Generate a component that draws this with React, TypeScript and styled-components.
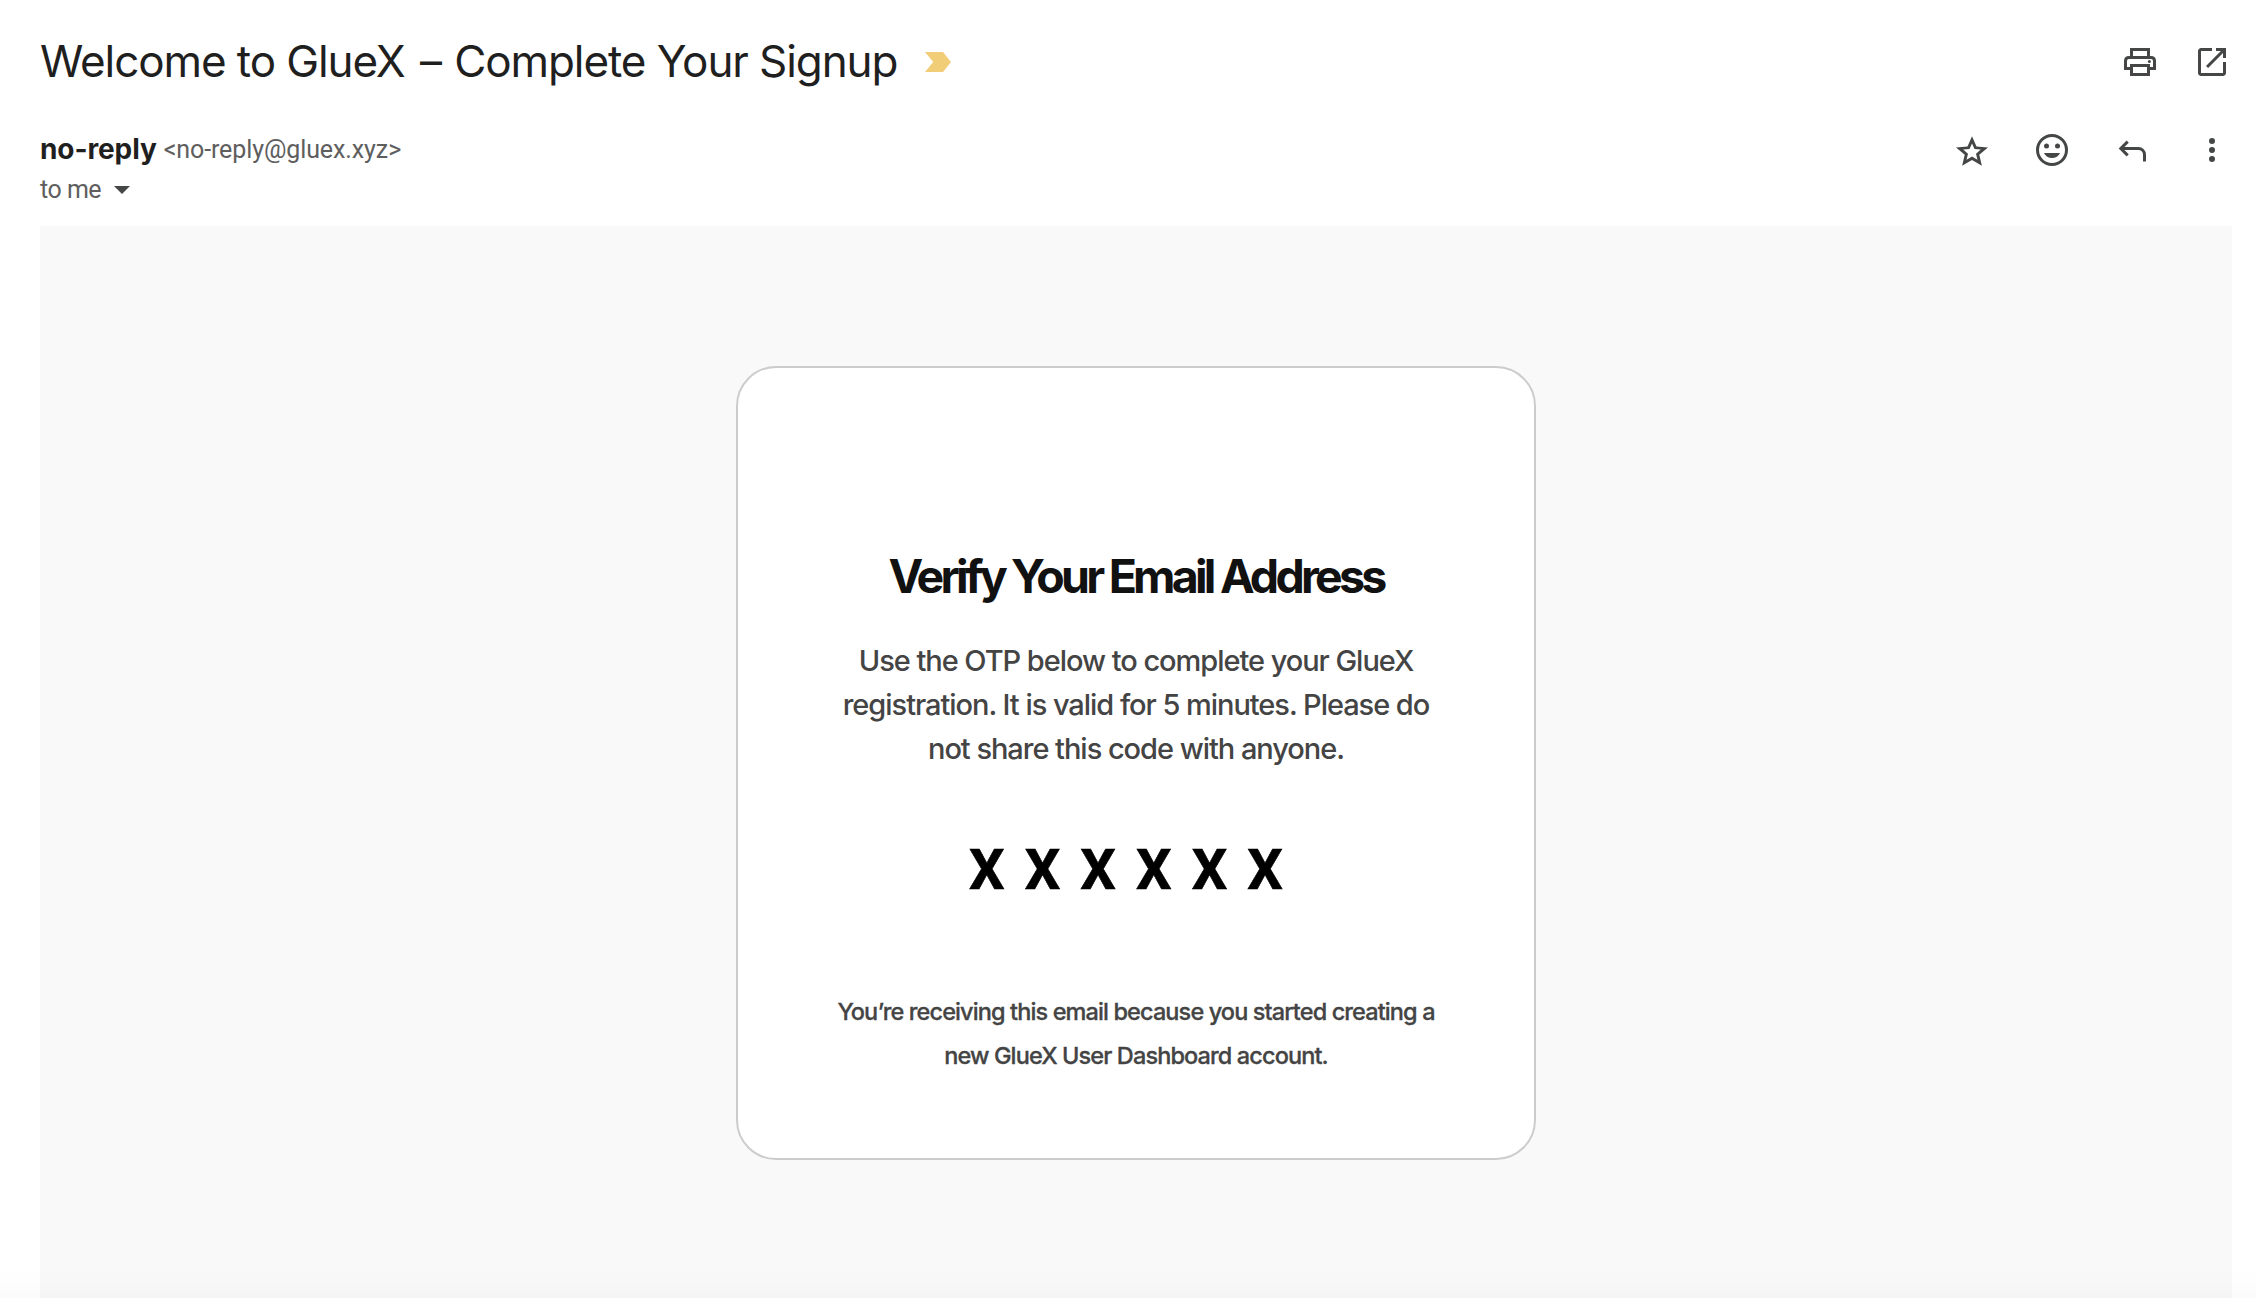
import React from "react";
import styled, { createGlobalStyle } from "styled-components";

const GlobalStyle = createGlobalStyle`
  * { box-sizing: border-box; }
  body { margin: 0; background: #fff; font-family: Inter, "Liberation Sans", sans-serif; }
  h1, h2, p { margin: 0; font-weight: inherit; }
`;

const Page = styled.main`
  display: flex;
  flex-direction: column;
  width: 100%;
  height: 1298px;
  padding: 0 24px 0 40px;
  overflow: hidden;
  background: linear-gradient(to bottom, #fff 1268px, #fbfbfb 1298px);
  color: #1f1f1f;
`;

const SubjectRow = styled.header`
  display: flex;
  align-items: center;
  justify-content: space-between;
  height: 124px;
`;

const SubjectGroup = styled.div`
  display: flex;
  align-items: center;
  gap: 28px;
`;

const Subject = styled.h1`
  padding-bottom: 2px;
  font-size: 44px;
  font-weight: 400;
  line-height: 54px;
  letter-spacing: -1.09px;
  white-space: nowrap;
`;

const Dash = styled.span`
  padding: 0 2px 0 4px;
`;

const Actions = styled.div<{ $gap: number }>`
  display: flex;
  align-items: center;
  gap: ${(p) => p.$gap}px;
  color: #444746;
`;

const IconButton = styled.button`
  display: grid;
  place-items: center;
  width: 40px;
  height: 40px;
  padding: 0;
  border: 0;
  background: none;
  color: inherit;

  svg { display: block; width: 40px; height: 40px; }
`;

const SenderRow = styled.section`
  display: flex;
  align-items: flex-start;
  justify-content: space-between;
  height: 102px;
  padding-top: 6px;
`;

const SenderInfo = styled.div`
  display: flex;
  flex-direction: column;
  padding-top: 1px;
  white-space: nowrap;
`;

const SenderLine = styled.div`
  display: flex;
  gap: 7px;
  height: 36px;
`;

const SenderName = styled.span`
  font-size: 28px;
  font-weight: 700;
  line-height: 36px;
  letter-spacing: -0.1px;
`;

const Meta = styled.span<{ $spacing: number }>`
  color: #5e5e5e;
  font-family: Roboto, "Liberation Sans", sans-serif;
  font-size: 25px;
  line-height: 37px;
  letter-spacing: ${(p) => p.$spacing}px;
`;

const RecipientLine = styled.div`
  display: flex;
  align-items: center;
  gap: 13px;
  margin-top: 4px;

  svg { margin-top: 1px; }
`;

const MessageBody = styled.section`
  display: flex;
  flex: 1;
  align-items: flex-start;
  justify-content: center;
  padding-top: 140px;
  background: linear-gradient(to bottom, #f9f9f9 1042px, #f5f5f5 1072px);
`;

const Card = styled.article`
  display: flex;
  flex-direction: column;
  align-items: center;
  width: 800px;
  height: 794px;
  padding-top: 180px;
  border: 2px solid #ccc;
  border-radius: 40px;
  background: #fff;
  text-align: center;
`;

const Heading = styled.h2`
  color: #111;
  font-size: 46.5px;
  font-weight: 700;
  line-height: 57px;
  letter-spacing: -3.76px;
  white-space: nowrap;
`;

const Instructions = styled.p`
  margin-top: 34px;
  color: #444;
  font-size: 29px;
  font-weight: 500;
  line-height: 44px;
  letter-spacing: -1.04px;
`;

const Code = styled.p`
  margin-top: 66px;
  color: #000;
  font-family: Roboto, "Liberation Sans", sans-serif;
  font-size: 56px;
  font-weight: 700;
  line-height: 66px;
  letter-spacing: 20.12px;
  -webkit-text-stroke: 0.6px #000;
`;

const Notice = styled.p`
  margin-top: 87px;
  color: #444;
  font-size: 23.5px;
  font-weight: 500;
  line-height: 44px;
  letter-spacing: -0.887px;
  -webkit-text-stroke: 0.3px #444;
`;

const Line = styled.span`
  display: block;
  white-space: nowrap;
`;

const ImportanceMarker = () => (
  <svg width="26" height="20" viewBox="0 0 26 20" fill="#f2cd78" aria-label="Important">
    <path d="M0 0h18l8 10-8 10H0l8.2-10z" />
  </svg>
);

const Caret = () => (
  <svg width="16" height="8" viewBox="0 0 16 8" fill="#444746" aria-hidden="true">
    <path d="M0 0h16L8 8z" />
  </svg>
);

const PrintIcon = () => (
  <svg viewBox="0 0 20 20" fill="none" stroke="currentColor" strokeWidth="1.5">
    <path d="M5.75 7V3.75h8.5V7M5 13.25H2.75V9.5Q2.75 7.75 4.5 7.75h11q1.75 0 1.75 1.75v3.75H15" />
    <path d="M5.75 11.75h8.5v4.5h-8.5z" />
    <circle cx="14.7" cy="9.7" r=".75" fill="currentColor" stroke="none" />
  </svg>
);

const OpenInNewIcon = () => (
  <svg viewBox="0 0 20 20" fill="currentColor">
    <path d="M4.5 17q-.62 0-1.06-.44T3 15.5v-11q0-.62.44-1.06T4.5 3H10v1.5H4.5v11h11V10H17v5.5q0 .62-.44 1.06T15.5 17ZM8.06 13 7 11.94 14.44 4.5H12V3h5v5h-1.5V5.56Z" />
  </svg>
);

const StarIcon = () => (
  <svg viewBox="0 0 20 20" fill="currentColor">
    <path
      transform="matrix(.8 0 0 .775 .4 1.6)"
      d="M22 9.24l-7.19-.62L12 2 9.19 8.63 2 9.24l5.46 4.73L5.82 21 12 17.27 18.18 21l-1.63-7.03L22 9.24zM12 15l-3.4 2.05.9-3.86-3-2.6 3.95-.34L12 6.6l1.55 3.65 3.95.34-3 2.6.9 3.86L12 15z"
    />
  </svg>
);

const ReactionIcon = () => (
  <svg viewBox="0 0 20 20" fill="currentColor">
    <circle cx="10" cy="10" r="7.25" fill="none" stroke="currentColor" strokeWidth="1.5" />
    <circle cx="7.25" cy="8" r="1.25" />
    <circle cx="12.75" cy="8" r="1.25" />
    <path d="M10 14q-1.33 0-2.42-.68T6 11.5h8q-.48 1.14-1.57 1.82T10 14z" />
  </svg>
);

const ReplyIcon = () => (
  <svg viewBox="0 0 20 20" fill="none" stroke="currentColor" strokeWidth="1.5">
    <path d="M4.4 9.25h8.8a3.05 3.05 0 0 1 3.05 3.05v3.4" />
    <path d="M7.85 5.8 4.4 9.25l3.45 3.45" />
  </svg>
);

const MoreIcon = () => (
  <svg viewBox="0 0 20 20" fill="currentColor">
    <circle cx="10" cy="5.5" r="1.5" />
    <circle cx="10" cy="10" r="1.5" />
    <circle cx="10" cy="14.5" r="1.5" />
  </svg>
);

export default function App() {
  return (
    <>
      <GlobalStyle />
      <Page>
        <SubjectRow>
          <SubjectGroup>
            <Subject>
              Welcome to GlueX <Dash>–</Dash> Complete Your Signup
            </Subject>
            <ImportanceMarker />
          </SubjectGroup>
          <Actions $gap={32}>
            <IconButton aria-label="Print"><PrintIcon /></IconButton>
            <IconButton aria-label="Open in new window"><OpenInNewIcon /></IconButton>
          </Actions>
        </SubjectRow>
        <SenderRow>
          <SenderInfo>
            <SenderLine>
              <SenderName>no-reply</SenderName>
              <Meta $spacing={-0.1}>&lt;no-reply@gluex.xyz&gt;</Meta>
            </SenderLine>
            <RecipientLine>
              <Meta $spacing={-0.5}>to me</Meta>
              <Caret />
            </RecipientLine>
          </SenderInfo>
          <Actions $gap={40}>
            <IconButton aria-label="Star"><StarIcon /></IconButton>
            <IconButton aria-label="Add reaction"><ReactionIcon /></IconButton>
            <IconButton aria-label="Reply"><ReplyIcon /></IconButton>
            <IconButton aria-label="More"><MoreIcon /></IconButton>
          </Actions>
        </SenderRow>
        <MessageBody>
          <Card>
            <Heading>Verify Your Email Address</Heading>
            <Instructions>
              <Line>Use the OTP below to complete your GlueX</Line>
              <Line>registration. It is valid for 5 minutes. Please do</Line>
              <Line>not share this code with anyone.</Line>
            </Instructions>
            <Code>XXXXXX</Code>
            <Notice>
              <Line>You’re receiving this email because you started creating a</Line>
              <Line>new GlueX User Dashboard account.</Line>
            </Notice>
          </Card>
        </MessageBody>
      </Page>
    </>
  );
}
